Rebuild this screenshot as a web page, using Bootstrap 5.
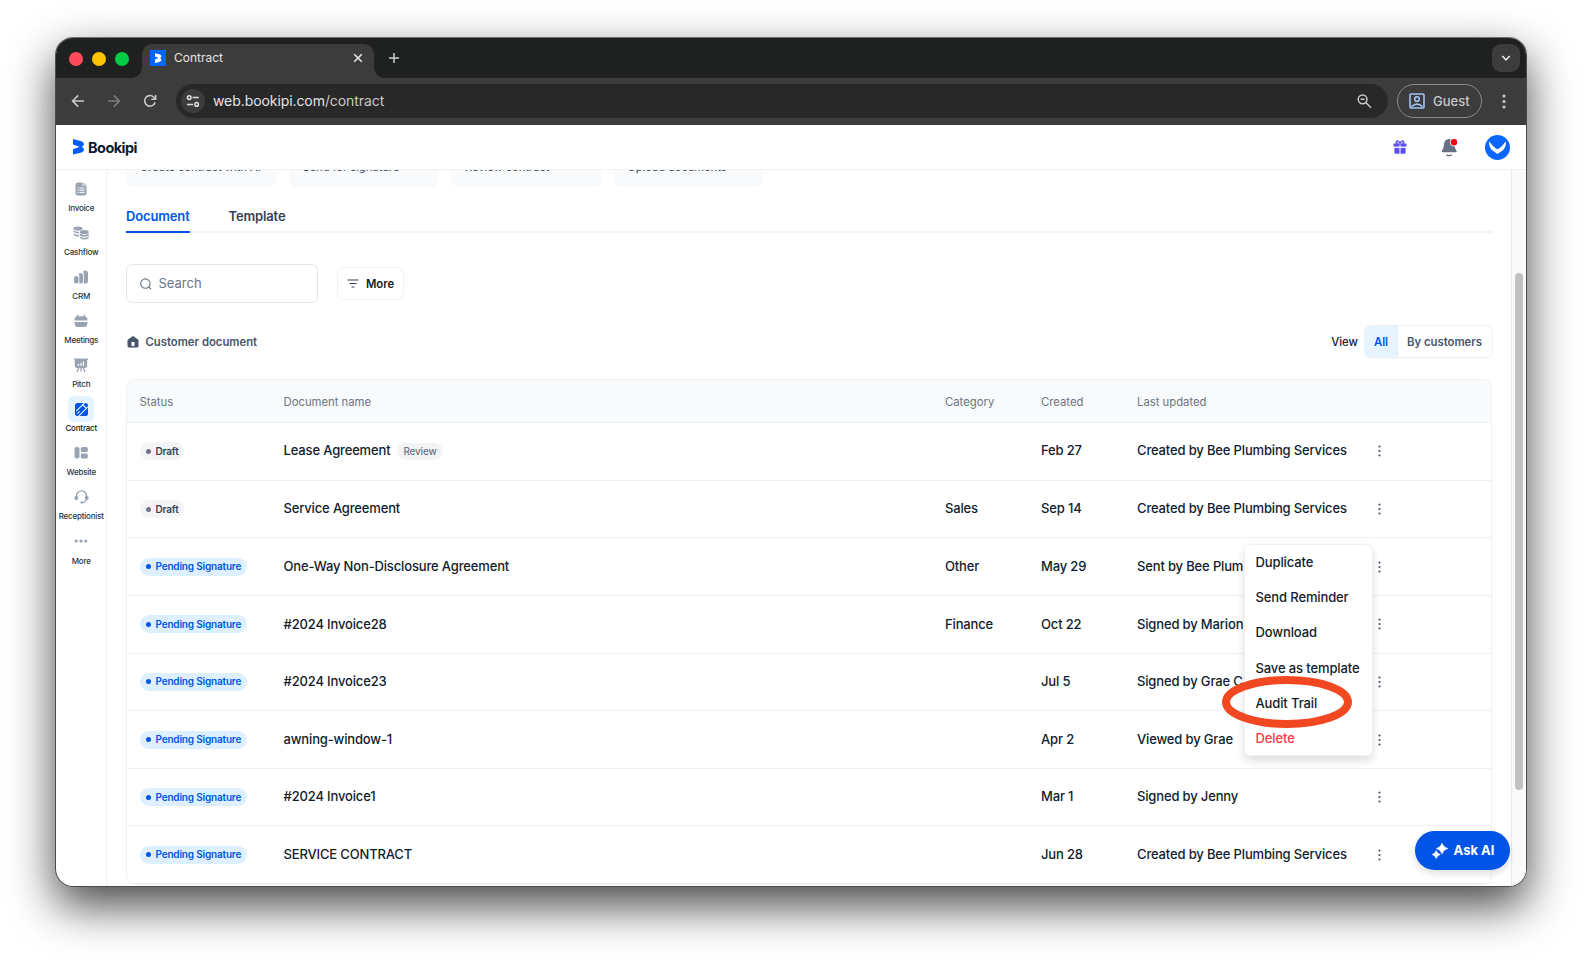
<!DOCTYPE html>
<html lang="en">
<head>
    <meta charset="UTF-8">
    <meta name="viewport" content="width=device-width, initial-scale=1.0">
    <title>Contract</title>
    <link href="https://cdn.jsdelivr.net/npm/bootstrap@5.3.0/dist/css/bootstrap.min.css" rel="stylesheet">
    <style>
        body {
            background-color: #fff;
            font-family: Inter, "Liberation Sans", sans-serif;
            font-size: 13px;
            color: #111c2d;
            height: 960px;
            overflow: hidden;
        }
        svg {
            display: block;
            flex: none;
        }
        .window {
            width: 1472px;
            height: 850px;
            margin: 37px 0 0 55px;
            border: 1px solid #4b4c4c;
            border-top-color: #6f7070;
            border-radius: 18px;
            overflow: hidden;
            box-shadow: 0 19px 46px rgba(0, 0, 0, .72);
        }

        /* browser chrome */
        .tab-strip {
            height: 40px;
            background: #1f2120;
            padding: 6px 6px 0 13px;
        }
        .light {
            width: 14px;
            height: 14px;
            border-radius: 50%;
        }
        .browser-tab {
            width: 232px;
            height: 34px;
            margin-left: 13px;
            padding: 0 11px 6px 8px;
            background: #3c3c3c;
            border-radius: 10px 10px 0 0;
            color: #e3e3e3;
            font-size: 12px;
            position: relative;
        }
        .browser-tab::before,
        .browser-tab::after {
            content: "";
            position: absolute;
            bottom: 0;
            width: 10px;
            height: 10px;
        }
        .browser-tab::before {
            left: -10px;
            background: radial-gradient(circle at 0 0, transparent 9.5px, #3c3c3c 10px);
        }
        .browser-tab::after {
            right: -10px;
            background: radial-gradient(circle at 100% 0, transparent 9.5px, #3c3c3c 10px);
        }
        .tab-search {
            width: 28px;
            height: 28px;
            border-radius: 9px;
            background: #3c3c3c;
        }
        .toolbar {
            height: 47px;
            background: #3c3c3c;
            padding: 0 20px 1px 14px;
            color: #c7c7c7;
        }
        .address {
            height: 34px;
            background: #282828;
            border-radius: 17px;
            margin-left: 18px;
            padding: 0 16px 0 5px;
            font-size: 14px;
            letter-spacing: -.08px;
        }
        .address-text {
            color: #e3e3e3;
            margin-bottom: 1px;
        }
        .site-info {
            width: 24px;
            height: 24px;
            border-radius: 50%;
            background: #3c3c3c;
        }
        .guest {
            width: 85px;
            height: 34px;
            border: 1px solid #8a8a8a;
            border-radius: 17px;
            margin-left: 9px;
            font-size: 13px;
            font-weight: 500;
            padding-left: 11px;
        }
        .guest span {
            padding-top: 1px;
        }

        /* app */
        .app-bar {
            height: 45px;
            border-bottom: 1px solid #f0f1f3;
            padding: 0 16px 0 17px;
        }
        .brand {
            font-size: 14.5px;
            font-weight: 700;
            letter-spacing: -.55px;
            color: #0b1a2e;
            line-height: 1;
            padding-top: 2px;
        }
        .app-body {
            height: 716px;
        }
        .side {
            width: 51px;
            border-right: 1px solid #f0f1f3;
            font-size: 8px;
            font-weight: 500;
            letter-spacing: -.2px;
            color: #253244;
            padding: 6px 0 0 .5px;
        }
        .side-item {
            height: 44px;
            line-height: 10px;
            color: inherit;
            text-decoration: none;
            white-space: nowrap;
        }
        .side-icon {
            width: 26px;
            height: 26px;
            border-radius: 6px;
            margin-bottom: 1px;
            color: #9aa3b2;
        }
        .side-item.active {
            color: #0b1626;
        }
        .side-item.active .side-icon {
            background: #e6f4ff;
            color: #0055e6;
        }
        .main {
            padding: 0 19px;
            overflow: hidden;
        }
        .quick {
            width: 149.5px;
            height: 60px;
            border-radius: 7px;
            background: #f8fafc;
            padding: 32px 14px 0;
            font-size: 11px;
            line-height: 16px;
            font-weight: 500;
            color: #4a5568;
            white-space: nowrap;
        }
        .quick-row {
            margin-top: -43px;
            gap: 13px;
        }
        .doc-tabs {
            gap: 39px;
            height: 33px;
            margin-top: 13px;
            border-bottom: 2px solid #f3f4f6;
            font-weight: 600;
            letter-spacing: -.15px;
            color: #364254;
        }
        .doc-tabs a {
            color: inherit;
            text-decoration: none;
            height: 33px;
            line-height: 33px;
        }
        .doc-tabs a.active {
            color: #0055e6;
            border-bottom: 2px solid #0055e6;
        }
        .search-box {
            width: 192px;
            height: 39px;
            border: 1px solid #e3e6ea;
            border-radius: 6px;
            padding-left: 12.5px;
            gap: 7px;
            color: #6b7585;
        }
        .outline-btn {
            width: 67px;
            height: 33px;
            border: 1px solid #f0f1f3;
            border-radius: 7px;
            margin-left: 19px;
            gap: 7px;
            font-size: 11.3px;
            font-weight: 600;
        }
        .outline-btn span,
        .list-head > span {
            padding-top: 1px;
        }
        .filters {
            margin-top: 31px;
        }
        .list-head {
            margin-top: 22px;
            height: 33px;
            font-size: 11.3px;
            font-weight: 600;
            color: #4a5568;
        }
        .seg {
            height: 33px;
            border: 1px solid #eef0f2;
            border-radius: 7px;
            overflow: hidden;
            margin-right: -1px;
            box-shadow: 0 1px 1px rgba(0, 0, 0, .03);
        }
        .seg span {
            line-height: 32px;
        }
        .doc-table {
            border: 1px solid #eef0f3;
            border-radius: 9px;
            margin-top: 21px;
            overflow: hidden;
        }
        .doc-table table {
            table-layout: fixed;
            margin: 0;
            color: inherit;
        }
        .doc-table th {
            height: 42px;
            padding: 3px 0 0 12.5px;
            background: #f8fafc;
            color: #6b7585;
            font-size: 11.3px;
            font-weight: 400;
            vertical-align: middle;
            border-bottom: 1px solid #eaedf1;
        }
        .doc-table td {
            height: 57.6px;
            padding: 0 0 0 12.5px;
            font-weight: 500;
            letter-spacing: -.155px;
            vertical-align: middle;
            white-space: nowrap;
            border-bottom: 1px solid #eff0f3;
        }
        .doc-table th:nth-child(n+3),
        .doc-table td:nth-child(n+3) {
            padding-left: 13px;
        }
        .doc-table tbody tr:first-child td {
            height: 58.4px;
        }
        .pill {
            display: flex;
            width: fit-content;
            align-items: center;
            height: 18px;
            border-radius: 9px;
            padding: 0 6px;
            gap: 5px;
            background: #f2f4f6;
            color: #364254;
            font-size: 10px;
            font-weight: 600;
            letter-spacing: -.18px;
        }
        .pill::before {
            content: "";
            width: 5px;
            height: 5px;
            border-radius: 50%;
            background: #6b7585;
        }
        .pill.pending {
            background: #deefff;
            color: #0055e6;
        }
        .pill.pending::before {
            background: #0055e6;
        }
        .tag {
            display: inline-block;
            height: 17px;
            line-height: 17px;
            border-radius: 9px;
            padding: 0 6px;
            margin-left: 7px;
            background: #f2f4f6;
            color: #6b7585;
            font-size: 10px;
            letter-spacing: -.2px;
        }
        .track {
            width: 15px;
            border-left: 1px solid #e8e8e8;
            background: #fafafa;
            padding: 103px 3px 0;
        }
        .thumb {
            width: 8px;
            height: 517px;
            border-radius: 4px;
            background: #c1c1c1;
        }

        /* floating layers */
        .row-menu {
            position: absolute;
            left: 1244px;
            top: 544px;
            width: 129px;
            height: 212px;
            background: #fff;
            border: 1px solid #eef0f2;
            border-radius: 6px;
            box-shadow: 0 5px 9px rgba(0, 0, 0, .13);
            font-weight: 500;
            letter-spacing: -.12px;
            padding-left: 10.5px;
        }
        .row-menu li {
            height: 35.2px;
            line-height: 34.6px;
            white-space: nowrap;
        }
        .ring {
            position: absolute;
            left: 1222px;
            top: 676px;
        }
        .ask-ai {
            position: absolute;
            left: 1415px;
            top: 831px;
            width: 95px;
            height: 39px;
            border-radius: 20px;
            background: #0055e6;
            color: #fff;
            font-weight: 700;
            gap: 6px;
            padding-left: 1px;
            box-shadow: 0 4px 7px rgba(0, 0, 0, .12);
        }
    </style>
</head>
<body>

<div class="window d-flow-root">
    <div class="tab-strip d-flex">
        <div class="d-flex gap-2 align-items-center" style="height: 29px">
            <div class="d-flex" style="gap: 9px">
                <span class="light" style="background: #ff4a5c"></span>
                <span class="light" style="background: #ffc400"></span>
                <span class="light" style="background: #00cb45"></span>
            </div>
        </div>
        <div class="browser-tab d-flex align-items-center">
            <svg width="16" height="16" viewBox="0 0 16 16"><path fill="#0066ff" d="M0 0h16v16H0z"/><path fill="#fff" d="M5 3.2 10 4.4Q12 5.2 11.3 6.8L10.2 8 11.3 9.3Q12 11 10 11.8L5 12.9V9.6L8.6 8 5 6.4z"/></svg>
            <span class="ms-2">Contract</span>
            <svg class="ms-auto" width="10" height="10" viewBox="0 0 10 10" stroke="#e3e3e3" stroke-width="1.6"><path d="m1.2 1.2 7.6 7.6M8.8 1.2 1.2 8.8"/></svg>
        </div>
        <svg style="margin: 9px 0 0 15px" width="10" height="10" viewBox="0 0 10 10" stroke="#d0d0d0" stroke-width="1.5"><path d="M5 0v10M0 5h10"/></svg>
        <div class="tab-search ms-auto d-flex align-items-center justify-content-center">
            <svg width="10" height="6" viewBox="0 0 10 6" fill="none" stroke="#e3e3e3" stroke-width="1.7"><path d="m1.2 1 3.8 3.8L8.8 1"/></svg>
        </div>
    </div>

    <div class="toolbar d-flex align-items-center">
        <svg width="16" height="16" viewBox="0 0 16 16" fill="none" stroke="#c7c7c7" stroke-width="1.6"><path d="M14 8H3M8.2 2.4 2.6 8l5.6 5.6"/></svg>
        <svg style="margin-left: 20px" width="16" height="16" viewBox="0 0 16 16" fill="none" stroke="#7c7c7c" stroke-width="1.6"><path d="M2 8h11M7.8 2.4 13.4 8l-5.6 5.6"/></svg>
        <svg style="margin-left: 20px" width="16" height="16" viewBox="0 0 16 16" fill="none" stroke="#c7c7c7" stroke-width="1.6"><path d="M13.1 9.2A5.3 5.3 0 1 1 11.6 4L13.4 5.8"/><path d="M13.6 2v4.3H9.3"/></svg>
        <div class="address d-flex align-items-center flex-grow-1">
            <span class="site-info d-flex align-items-center justify-content-center">
                <svg width="14" height="12" viewBox="0 0 14 12" fill="none" stroke="#e0e0e0" stroke-width="1.5"><circle cx="3.2" cy="2.6" r="1.8"/><path d="M6.6 2.6h6M1 9.4h6"/><circle cx="10.6" cy="9.4" r="1.8"/></svg>
            </span>
            <span class="address-text ms-2">web.bookipi.com<span style="color: #c7c7c7">/contract</span></span>
            <svg class="ms-auto" width="15" height="15" viewBox="0 0 15 15" fill="none" stroke="#c7c7c7" stroke-width="1.5"><circle cx="5.6" cy="5.3" r="4.4"/><path d="m8.8 8.5 5.2 5.2M3.6 5.3h4"/></svg>
        </div>
        <div class="guest d-flex align-items-center">
            <svg width="16" height="16" viewBox="0 0 16 16" fill="none" stroke="#a0c4f8" stroke-width="1.6"><rect x="1" y="1" width="14" height="14" rx="1"/><circle cx="8" cy="6.1" r="2.3"/><path d="M2.5 13.6Q8 8.6 13.5 13.6"/></svg>
            <span class="ms-2">Guest</span>
        </div>
        <svg style="margin-left: 20px" width="4" height="15" viewBox="0 0 4 15" fill="#c7c7c7"><circle cx="2" cy="2" r="1.6"/><circle cx="2" cy="7.5" r="1.6"/><circle cx="2" cy="13" r="1.6"/></svg>
    </div>

    <div class="app-bar d-flex align-items-center">
        <svg width="11" height="16" viewBox="0 0 11 16" fill="#005cff"><path d="M0 0 7.5 1.9Q11 3 11 5.2 11 6.8 8.6 7.8 11 8.9 11 10.5 11 12.8 7.5 13.7L0 15.5V10.3L6.5 7.8 0 5.4z"/></svg>
        <span class="brand ms-1">Bookipi</span>
        <svg class="ms-auto" width="14" height="14" viewBox="0 0 14 14"><g fill="#5a4ff3"><rect x=".5" y="3.4" width="13" height="3.4" rx="1"/><path d="M1.4 7.6h11.2v4.6a1.6 1.6 0 0 1-1.6 1.6H3a1.6 1.6 0 0 1-1.6-1.6z"/></g><path fill="none" stroke="#5a4ff3" stroke-width="1.5" d="M7 3.5C6 .2 3 .4 3.2 2.4c.1.8.8 1.1 1.6 1.1M7 3.5C8 .2 11 .4 10.8 2.4c-.1.8-.8 1.1-1.6 1.1"/><path stroke="#fff" stroke-width="1" d="M7 4.4v9.6M1 7.3h12"/></svg>
        <svg style="margin-left: 34.5px" width="17" height="19" viewBox="0 0 17 19"><path fill="#667085" d="M8 1C4.9 1 3.3 3.2 3 6.2L2.7 9Q2.5 10.5 1 12.4q-1 1.6.6 1.9h13.2q1.6-.3.6-1.9-1.5-1.9-1.7-3.4L13 6.2C12.7 3.2 11.1 1 8 1z"/><path fill="none" stroke="#667085" stroke-width="1.4" d="M5.5 16.8q2.6 1.6 5.2 0"/><circle cx="13" cy="4.2" r="4" fill="#fff"/><circle cx="13" cy="4.2" r="3.2" fill="#f5000f"/></svg>
        <svg style="margin-left: 27px" width="25" height="25" viewBox="0 0 25 25"><circle cx="12.5" cy="12.5" r="12.5" fill="#0a66ff"/><path fill="#fff" d="M4.2 6.2Q8.5 12.5 12.5 14.3 16.5 12.5 20.8 6.2 21.6 12 17.5 15.4L12.5 19 7.5 15.4Q3.4 12 4.2 6.2z"/></svg>
    </div>

    <div class="app-body d-flex">
        <nav class="side flex-shrink-0">
            <a class="side-item d-flex flex-column align-items-center" href="#">
                <span class="side-icon d-flex align-items-center justify-content-center"><svg width="12" height="14" viewBox="0 0 12 14"><path fill="currentColor" d="M3 .5h4.5v3h4V11A2.5 2.5 0 0 1 9 13.500H3A2.5 2.5 0 0 1 .5 11V3A2.5 2.5 0 0 1 3 .5zM8.500.5l3 2.300h-3z"/><path stroke="#fff" d="M2.300 6h1.200M4.500 6h5M2.300 8.200h1.200M4.500 8.200h5M2.300 10.400h1.200M4.500 10.400h5"/></svg></span>
                Invoice
            </a>
            <a class="side-item d-flex flex-column align-items-center" href="#">
                <span class="side-icon d-flex align-items-center justify-content-center"><svg width="16" height="14" viewBox="0 0 16 14" fill="currentColor"><ellipse cx="5" cy="2.500" rx="4.500" ry="2"/><path d="M.5 4.300Q2.500 6 6 5.800v1.600Q1.500 7.300.5 5.500zM.5 7.600Q2.500 9.200 6 9v1.600Q1.500 10.500.5 8.800z"/><ellipse cx="11.300" cy="6" rx="4.500" ry="2"/><path d="M6.800 7.600q4.500 2.600 9 0v1.800q-4.500 2.500-9 0zM6.800 10.600q4.500 2.600 9 0v1.300q-4.500 3-9 0z"/></svg></span>
                Cashflow
            </a>
            <a class="side-item d-flex flex-column align-items-center" href="#">
                <span class="side-icon d-flex align-items-center justify-content-center"><svg width="14" height="14" viewBox="0 0 14 14" fill="currentColor"><rect y="6" width="4.500" height="7.500" rx="2"/><path d="M4.500 4.200Q5 3 6.500 3q2.500 0 2.500 2.500V11q0 2.500-2.500 2.500H5.300V6Q5.300 5 4.500 4.200zM9 1.800Q9.500.5 11.300.5 14 .5 14 3v8q0 2.500-2.700 2.500H9.800V4Q9.800 2.600 9 1.800z"/></svg></span>
                CRM
            </a>
            <a class="side-item d-flex flex-column align-items-center" href="#">
                <span class="side-icon d-flex align-items-center justify-content-center"><svg width="14" height="14" viewBox="0 0 14 14" fill="currentColor"><path d="M3 .8h1.300v1.400h5.400V.8H11v1.400q2.500.3 2.500 4.300H.5Q.5 2.500 3 2.200zM.5 8h13q0 5-3 5h-7q-3 0-3-5z"/></svg></span>
                Meetings
            </a>
            <a class="side-item d-flex flex-column align-items-center" href="#">
                <span class="side-icon d-flex align-items-center justify-content-center"><svg width="14" height="15" viewBox="0 0 14 15"><path fill="currentColor" d="M0 .5h14v1.300h-.8v5.700q0 2.500-2.500 2.500H3.300Q.8 10 .8 7.500V1.800H0z"/><path stroke="currentColor" stroke-width="1.300" d="M7 10v3.500M5 10l-2.200 4M9 10l2.200 4"/><path stroke="#fff" stroke-width="1.200" d="M4.500 8V6M7 8V5M9.500 8V3.500"/></svg></span>
                Pitch
            </a>
            <a class="side-item active d-flex flex-column align-items-center" href="#">
                <span class="side-icon d-flex align-items-center justify-content-center"><svg width="13" height="13" viewBox="0 0 13 13"><rect width="13" height="13" rx="2.800" fill="currentColor"/><path stroke="#e6f4ff" fill="none" stroke-width="1.100" d="M9.600-.2 1.200 8.200M3.600 13.200 13.200 3.600M8 2l3 3M2.400 10.600 4.600 8.400"/></svg></span>
                Contract
            </a>
            <a class="side-item d-flex flex-column align-items-center" href="#">
                <span class="side-icon d-flex align-items-center justify-content-center"><svg width="14" height="12" viewBox="0 0 14 12" fill="currentColor"><rect x=".5" width="5" height="11.500" rx="2"/><rect x="6.800" width="7" height="5" rx="1.600"/><rect x="6.800" y="6.500" width="7" height="5" rx="1.600"/></svg></span>
                Website
            </a>
            <a class="side-item d-flex flex-column align-items-center" href="#">
                <span class="side-icon d-flex align-items-center justify-content-center"><svg width="15" height="14" viewBox="0 0 15 14"><path fill="none" stroke="currentColor" stroke-width="1.300" d="M2.500 7V5.800a5 5 0 0 1 10 0V9q-.5 3.500-4.500 3.700"/><rect x=".5" y="6" width="3.600" height="4" rx="1.400" fill="currentColor"/><rect x="10.900" y="6" width="3.600" height="4" rx="1.400" fill="currentColor"/><rect x="6.300" y="11.600" width="3" height="2" rx="1" fill="currentColor"/></svg></span>
                Receptionist
            </a>
            <a class="side-item d-flex flex-column align-items-center" href="#">
                <span class="side-icon d-flex align-items-center justify-content-center" style="margin-bottom: 2px"><svg width="14" height="4" viewBox="0 0 14 4" fill="currentColor"><circle cx="2.200" cy="2" r="1.600"/><circle cx="7" cy="2" r="1.600"/><circle cx="11.800" cy="2" r="1.600"/></svg></span>
                More
            </a>
        </nav>

        <main class="main flex-grow-1">
            <div class="quick-row d-flex">
                <div class="quick">Create contract with AI</div>
                <div class="quick">Send for signature</div>
                <div class="quick">Review contract</div>
                <div class="quick">Upload documents</div>
            </div>

            <div class="doc-tabs d-flex">
                <a class="active" href="#">Document</a>
                <a href="#">Template</a>
            </div>

            <div class="filters d-flex align-items-center">
                <div class="search-box d-flex align-items-center">
                    <svg width="12" height="12" viewBox="0 0 12 12" fill="none" stroke="#6b7585" stroke-width="1.100"><circle cx="5.400" cy="5.600" r="4.700"/><path d="m8.800 9 2.400 2.400"/></svg>
                    <span>Search</span>
                </div>
                <div class="outline-btn d-flex align-items-center justify-content-center">
                    <svg width="12" height="9" viewBox="0 0 12 9" stroke="#364254" stroke-width="1.200"><path d="M.5 1h11M2.500 4.500h7M4.500 8h3"/></svg>
                    <span>More</span>
                </div>
            </div>

            <div class="list-head d-flex align-items-center">
                <svg style="margin-left: 1px" width="12" height="12" viewBox="0 0 12 12"><path fill="#4a5568" d="M6 0 11 3.600q.5.400.5 1V10q0 1.500-1.500 1.500H2Q.5 11.500.5 10V4.600q0-.6.500-1z"/><path fill="#fff" d="M4.500 6h3v4h-3z"/></svg>
                <span style="margin-left: 6.500px">Customer document</span>
                <span class="ms-auto" style="margin-right: 6px; color: #111c2d; font-weight: 500">View</span>
                <div class="seg d-flex">
                    <span style="background: #e6f4ff; color: #0055e6; padding: 0 9px; border-right: 1px solid #e3ebf3">All</span>
                    <span style="padding: 0 10px 0 9px">By customers</span>
                </div>
            </div>

            <div class="doc-table">
                <table class="table">
                    <colgroup>
                        <col style="width: 144px"><col style="width: 661px"><col style="width: 96px"><col style="width: 96px"><col style="width: 241px"><col>
                    </colgroup>
                    <thead>
                        <tr><th>Status</th><th>Document name</th><th>Category</th><th>Created</th><th>Last updated</th><th></th></tr>
                    </thead>
                    <tbody id="doc-rows"></tbody>
                </table>
            </div>
        </main>

        <div class="track flex-shrink-0"><div class="thumb"></div></div>
    </div>
</div>

<ul class="row-menu list-unstyled m-0">
    <li>Duplicate</li>
    <li>Send Reminder</li>
    <li>Download</li>
    <li>Save as template</li>
    <li>Audit Trail</li>
    <li style="color: #fb3748">Delete</li>
</ul>
<svg class="ring" width="130" height="52" viewBox="0 0 130 52"><ellipse cx="65" cy="26" rx="61" ry="22" fill="none" stroke="#f24822" stroke-width="8"/></svg>

<div class="ask-ai d-flex align-items-center justify-content-center">
    <svg width="16" height="16" viewBox="0 0 16 16" fill="#fff"><path d="M10 .2Q11.200 4.300 15.800 5.500 11.200 6.700 10 11 8.800 6.700 4.400 5.500 8.800 4.300 10 .2zM4.200 7.600Q5 10.600 8.200 11.500 5 12.400 4.200 15.600 3.400 12.400.2 11.500 3.400 10.600 4.200 7.600z" stroke="#fff" stroke-width=".6"/></svg>
    <span>Ask AI</span>
</div>

<script>
    var docs = [
        ['Draft', 'Lease Agreement', '', 'Feb 27', 'Created by Bee Plumbing Services'],
        ['Draft', 'Service Agreement', 'Sales', 'Sep 14', 'Created by Bee Plumbing Services'],
        ['Pending Signature', 'One-Way Non-Disclosure Agreement', 'Other', 'May 29', 'Sent by Bee Plum'],
        ['Pending Signature', '#2024 Invoice28', 'Finance', 'Oct 22', 'Signed by Marion'],
        ['Pending Signature', '#2024 Invoice23', '', 'Jul 5', 'Signed by Grae C'],
        ['Pending Signature', 'awning-window-1', '', 'Apr 2', 'Viewed by Grae'],
        ['Pending Signature', '#2024 Invoice1', '', 'Mar 1', 'Signed by Jenny'],
        ['Pending Signature', 'SERVICE CONTRACT', '', 'Jun 28', 'Created by Bee Plumbing Services']
    ];
    var dots = '<svg width="3" height="12" viewBox="0 0 3 12" fill="#4a5568"><circle cx="1.5" cy="1.5" r="1.1"/><circle cx="1.5" cy="6" r="1.1"/><circle cx="1.5" cy="10.5" r="1.1"/></svg>';

    document.getElementById('doc-rows').innerHTML = docs.map(function(d, i) {
        var tag = i === 0 ? '<span class="tag">Review</span>' : '';
        return `
            <tr>
                <td><span class="pill ${d[0] === 'Draft' ? '' : 'pending'}">${d[0]}</span></td>
                <td>${d[1]}${tag}</td>
                <td>${d[2]}</td>
                <td>${d[3]}</td>
                <td>${d[4]}</td>
                <td>${dots}</td>
            </tr>
        `;
    }).join('');
</script>

<script src="https://cdn.jsdelivr.net/npm/bootstrap@5.3.0/dist/js/bootstrap.bundle.min.js"></script>
</body>
</html>
